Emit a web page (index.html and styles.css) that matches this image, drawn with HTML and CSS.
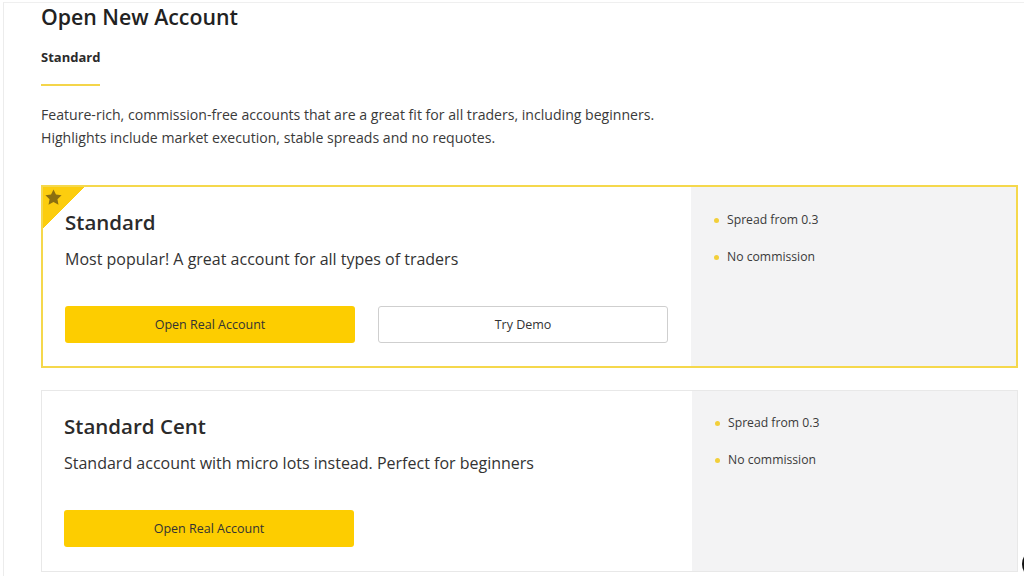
FILE: index.html
```html
<!DOCTYPE html>
<html lang="en">
<head>
<meta charset="utf-8">
<title>Open New Account</title>
<link rel="stylesheet" href="styles.css">
</head>
<body>
<div class="frame">
  <div class="page">
    <h1 class="title">Open New Account</h1>
    <div class="tabs">
      <div class="tab active">Standard</div>
    </div>
    <p class="intro">Feature-rich, commission-free accounts that are a great fit for all traders, including beginners.<br>Highlights include market execution, stable spreads and no requotes.</p>

    <div class="card featured">
      <div class="corner">
        <svg class="star" viewBox="0 0 24 24" width="19" height="19"><path d="M12 1.8l3.1 6.5 7.1.9-5.2 4.9 1.3 7-6.3-3.4-6.3 3.4 1.3-7-5.2-4.9 7.1-.9z" fill="#8c6f10"/></svg>
      </div>
      <div class="card-main">
        <h2 class="card-title">Standard</h2>
        <p class="card-desc">Most popular! A great account for all types of traders</p>
        <div class="actions">
          <button class="btn btn-primary">Open Real Account</button>
          <button class="btn btn-outline">Try Demo</button>
        </div>
      </div>
      <ul class="features">
        <li>Spread from 0.3</li>
        <li>No commission</li>
      </ul>
    </div>

    <div class="card">
      <div class="card-main">
        <h2 class="card-title">Standard Cent</h2>
        <p class="card-desc">Standard account with micro lots instead. Perfect for beginners</p>
        <div class="actions">
          <button class="btn btn-primary">Open Real Account</button>
        </div>
      </div>
      <ul class="features">
        <li>Spread from 0.3</li>
        <li>No commission</li>
      </ul>
    </div>
  </div>
  <div class="chat-btn"></div>
</div>
</body>
</html>
```
FILE: styles.css
```css
* { box-sizing: border-box; }
html, body { margin: 0; padding: 0; background: #fff; }
body {
  font-family: "Open Sans", "Noto Sans", sans-serif;
  color: #333;
  width: 1024px;
  height: 576px;
  overflow: hidden;
}
.frame {
  position: relative;
  margin: 2px 0 0 3px;
  border-top: 1px solid #efefef;
  border-left: 1px solid #ececec;
  height: 580px;
}
.page {
  padding: 0 6px 0 37px;
}
.title {
  margin: 0;
  font-size: 21.3px;
  font-weight: 600;
  line-height: 28px;
  color: #222;
}
.tabs {
  display: flex;
  margin-top: 16px;
}
.tab {
  font-size: 13px;
  font-weight: 700;
  color: #2b2b2b;
  line-height: 20px;
  padding-bottom: 17px;
  border-bottom: 2px solid #f4d54a;
}
.intro {
  margin: 17px 0 0;
  font-size: 14.1px;
  line-height: 23px;
  color: #3a3a3a;
}
.card {
  display: flex;
  margin-top: 23px;
  border: 1px solid #e8e8e8;
  height: 182px;
  position: relative;
  width: 977px;
}
.card.featured {
  margin-top: 36px;
  height: 183px;
  border: 2px solid #f5d84c;
}
.card + .card { margin-top: 22px; }
.corner {
  position: absolute;
  left: 0;
  top: 0;
  width: 41px;
  height: 41px;
  background: linear-gradient(135deg, #fccd0e 50%, transparent 50%);
}
.star {
  position: absolute;
  left: 1px;
  top: 1px;
}
.card-main {
  flex: 1;
  padding: 21px 22px 0 22px;
  background: #fff;
}
.card-title {
  margin: 0;
  font-size: 20.5px;
  font-weight: 600;
  line-height: 28px;
  color: #2b2b2b;
}
.card-desc {
  margin: 12px 0 0;
  font-size: 16px;
  line-height: 22px;
  color: #333;
}
.actions {
  display: flex;
  gap: 23px;
  margin-top: 36px;
}
.btn {
  width: 290px;
  height: 37px;
  border-radius: 3px;
  font-family: "Open Sans", "Noto Sans", sans-serif;
  font-size: 12.5px;
  color: #333;
  cursor: pointer;
}
.btn-primary {
  background: #fdcd00;
  border: none;
}
.btn-outline {
  background: #fff;
  border: 1px solid #cfcfcf;
}
.features {
  width: 325px;
  margin: 0;
  padding: 23px 0 0 36px;
  list-style: none;
  background: #f3f3f4;
}
.featured .features { padding-top: 24px; }
.features li {
  position: relative;
  font-size: 12.2px;
  line-height: 18px;
  color: #3a3a3a;
  margin-bottom: 19px;
}
.features li::before {
  content: "";
  position: absolute;
  left: -13px;
  top: 7px;
  width: 5px;
  height: 5px;
  border-radius: 50%;
  background: #f2cf3a;
}
.chat-btn {
  position: absolute;
  right: -28px;
  top: 546px;
  width: 30px;
  height: 30px;
  border-radius: 50%;
  background: #111;
}
```
